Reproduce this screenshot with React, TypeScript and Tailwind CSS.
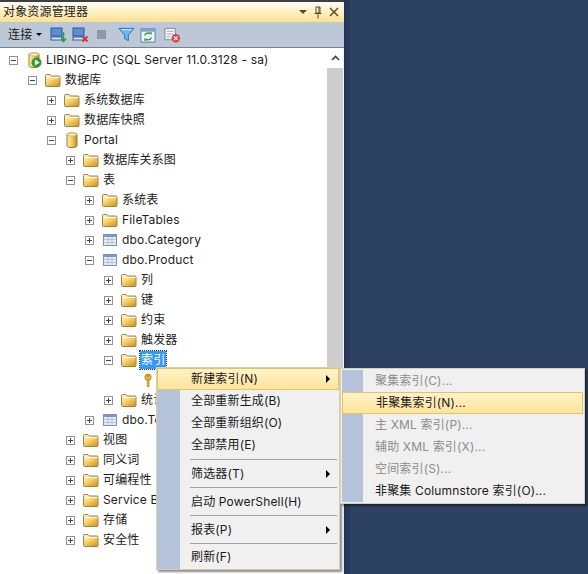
const fontStack = "font-['Inter','Noto_Sans_CJK_SC',sans-serif]";

type RowKind = "server" | "db" | "folder" | "table" | "key";

interface Row {
  level: number;
  text: string;
  kind: RowKind;
  box?: "plus" | "minus";
  selected?: boolean;
}

const rows: Row[] = [
  { level: 0, text: "LIBING-PC (SQL Server 11.0.3128 - sa)", kind: "server", box: "minus" },
  { level: 1, text: "数据库", kind: "folder", box: "minus" },
  { level: 2, text: "系统数据库", kind: "folder", box: "plus" },
  { level: 2, text: "数据库快照", kind: "folder", box: "plus" },
  { level: 2, text: "Portal", kind: "db", box: "minus" },
  { level: 3, text: "数据库关系图", kind: "folder", box: "plus" },
  { level: 3, text: "表", kind: "folder", box: "minus" },
  { level: 4, text: "系统表", kind: "folder", box: "plus" },
  { level: 4, text: "FileTables", kind: "folder", box: "plus" },
  { level: 4, text: "dbo.Category", kind: "table", box: "plus" },
  { level: 4, text: "dbo.Product", kind: "table", box: "minus" },
  { level: 5, text: "列", kind: "folder", box: "plus" },
  { level: 5, text: "键", kind: "folder", box: "plus" },
  { level: 5, text: "约束", kind: "folder", box: "plus" },
  { level: 5, text: "触发器", kind: "folder", box: "plus" },
  { level: 5, text: "索引", kind: "folder", box: "minus", selected: true },
  { level: 6, text: "", kind: "key" },
  { level: 5, text: "统计信息", kind: "folder", box: "plus" },
  { level: 4, text: "dbo.Test", kind: "table", box: "plus" },
  { level: 3, text: "视图", kind: "folder", box: "plus" },
  { level: 3, text: "同义词", kind: "folder", box: "plus" },
  { level: 3, text: "可编程性", kind: "folder", box: "plus" },
  { level: 3, text: "Service Broker", kind: "folder", box: "plus" },
  { level: 3, text: "存储", kind: "folder", box: "plus" },
  { level: 3, text: "安全性", kind: "folder", box: "plus" },
];

// inline-style padding: depends on the row's level
const indent = (level: number) => ({ paddingLeft: 9 + level * 19 });

function FolderIcon() {
  return (
    <svg width="16" height="13" viewBox="0 0 16 13">
      <defs>
        <linearGradient id="fld" x1="0" y1="0" x2="0.7" y2="1">
          <stop offset="0" stopColor="#fff6cf" />
          <stop offset="0.5" stopColor="#f8d674" />
          <stop offset="1" stopColor="#dd9c20" />
        </linearGradient>
      </defs>
      <path d="M0.500 11.500V1.500a1 1 0 0 1 1-1h3.500l1.500 1.500h7.500a1 1 0 0 1 1 1v8.500a1 1 0 0 1-1 1h-12.500a1 1 0 0 1-1-1z" fill="url(#fld)" stroke="#9a8550" strokeWidth="1" />
      <path d="M1.500 3.500h13" stroke="#fffdf0" strokeWidth="1" />
    </svg>
  );
}

function DbIcon({ play }: { play?: boolean }) {
  return (
    <svg width="16" height="18" viewBox="0 0 16 18">
      <defs>
        <linearGradient id="cyl" x1="0" y1="0" x2="1" y2="0">
          <stop offset="0" stopColor="#fff0b0" />
          <stop offset="0.5" stopColor="#f2cd5c" />
          <stop offset="1" stopColor="#c08a1c" />
        </linearGradient>
      </defs>
      <path d="M3 3.500C3 1.500 13 1.500 13 3.500V15C13 17 3 17 3 15z" fill="url(#cyl)" stroke="#9a7a34" />
      <ellipse cx="8" cy="3.500" rx="4.500" ry="1.500" fill="#fff6cf" stroke="#b89440" strokeWidth="0.6" />
      {play && <circle cx="10.500" cy="11.500" r="5" fill="#2f9a33" />}
      {play && <path d="M8.800 8.500l5 3-5 3z" fill="#fff" />}
    </svg>
  );
}

function TableIcon() {
  return (
    <svg width="14" height="12" viewBox="0 0 14 12">
      <rect x="0.500" y="0.500" width="13" height="11" fill="#e8eef8" stroke="#7d92b8" />
      <rect x="1" y="1" width="12" height="2" fill="#7d96c6" />
      <path d="M1 5.500h12M1 8.500h12M5 3v8M9 3v8" stroke="#b4c2dc" strokeWidth="1" />
    </svg>
  );
}

function KeyIcon() {
  return (
    <svg width="10" height="15" viewBox="0 0 12 17">
      <circle cx="6" cy="4.500" r="3.800" fill="#e9b93f" stroke="#a97f22" />
      <circle cx="6" cy="3" r="1" fill="#8a6a20" />
      <path d="M5 8v7.500l1.500 1 1-1V14l-1-0.700 1-0.800v-1l-1-0.700 1-0.800V8z" fill="#dca830" stroke="#a97f22" strokeWidth="0.6" />
    </svg>
  );
}

function ExpandBox({ type }: { type: "plus" | "minus" }) {
  return (
    <span className="relative flex h-[9px] w-[9px] items-center justify-center border border-[#919191] bg-white">
      <span className="h-px w-[5px] bg-[#444]" />
      {type === "plus" && <span className="absolute h-[5px] w-px bg-[#444]" />}
    </span>
  );
}

function TreeRow({ row }: { row: Row }) {
  return (
    <div className="flex h-5 items-center whitespace-nowrap" style={indent(row.level)}>
      <span className="flex w-[9px] shrink-0 justify-center">{row.box && <ExpandBox type={row.box} />}</span>
      <span className="ml-[8px] flex w-4 shrink-0 items-center justify-center">
        {row.kind === "folder" && <FolderIcon />}
        {row.kind === "db" && <DbIcon />}
        {row.kind === "server" && <DbIcon play />}
        {row.kind === "table" && <TableIcon />}
        {row.kind === "key" && <KeyIcon />}
      </span>
      {row.text && (
        <span className={row.selected ? "ml-[3px] bg-[#3399ff] px-[1px] text-white outline outline-1 outline-dotted outline-[#333]" : "ml-1"}>
          {row.text}
        </span>
      )}
    </div>
  );
}

function ToolIcons() {
  return (
    <div className="ml-[8px] flex items-center gap-[5px]">
      <svg width="17" height="17" viewBox="0 0 17 17">
        <rect x="1" y="2" width="11" height="8" fill="#5c8ed0" stroke="#2f5a9c" />
        <rect x="1" y="11" width="11" height="3" fill="#dfe7f3" stroke="#2f5a9c" />
        <path d="M13.500 6v9M11 12.500l2.500 3 2.500-3" stroke="#27a03a" strokeWidth="1.500" fill="none" />
      </svg>
      <svg width="17" height="17" viewBox="0 0 17 17">
        <rect x="1" y="2" width="11" height="8" fill="#5c8ed0" stroke="#2f5a9c" />
        <rect x="1" y="11" width="11" height="3" fill="#dfe7f3" stroke="#2f5a9c" />
        <path d="M10.500 10.500l5 5M15.500 10.500l-5 5" stroke="#d8322a" strokeWidth="1.800" />
      </svg>
      <span className="ml-[3px] mr-[7px] h-[9px] w-[9px] border border-[#8a94a5] bg-[#8f98a8]" />
      <svg width="17" height="17" viewBox="0 0 18 17">
        <path d="M1 2h16l-6 7v6l-4-2V9z" fill="#6bb7ee" stroke="#2a72c0" />
        <path d="M3.500 3.500h11" stroke="#e6f5ff" />
      </svg>
      <svg width="16" height="16" viewBox="0 0 17 17">
        <rect x="1" y="2" width="15" height="14" fill="#eef3fa" stroke="#5d7aa8" />
        <rect x="1" y="2" width="15" height="3" fill="#7fa3d4" />
        <path d="M5 9a3.500 3.500 0 0 1 6-1.500M12 11a3.500 3.500 0 0 1-6 1.500" stroke="#2f9a33" strokeWidth="1.500" fill="none" />
        <path d="M10 5.500l2.500 0v3zM7 14.500H4.500v-3z" fill="#2f9a33" />
      </svg>
      <svg className="ml-[3px]" width="17" height="18" viewBox="0 0 18 18">
        <path d="M1 2h11v12H1z" fill="#f3f5f9" stroke="#7d8798" />
        <path d="M3 5h7M3 8h7M3 11h4" stroke="#9aa5b8" />
        <circle cx="12.500" cy="12.500" r="4.500" fill="#d9424a" />
        <path d="M10.500 10.500l4 4M14.500 10.500l-4 4" stroke="#fff" strokeWidth="1.200" />
      </svg>
    </div>
  );
}

function MenuItem({ text, arrow, hot, off, h = "h-[22px]" }: { text: string; arrow?: boolean; hot?: boolean; off?: boolean; h?: string }) {
  return (
    <div className={`relative flex ${h} items-center whitespace-nowrap`}>
      {hot && <div className="absolute inset-0 border border-[#e5c365] bg-gradient-to-b from-[#fff3c8] to-[#ffe49b]" />}
      <span className={`relative ml-[34px] ${off ? "text-[#8d8d8d]" : "text-[#1a1a1a]"}`}>{text}</span>
      {arrow && <span className="absolute right-[9px] h-0 w-0 border-y-[4px] border-l-[4px] border-y-transparent border-l-black" />}
    </div>
  );
}

const MenuSep = () => <div className="ml-[33px] mr-[2px] h-px bg-[#a5a5a5]" />;

export default function App() {
  return (
    <div className={`relative flex h-[574px] w-[588px] overflow-hidden bg-[#2d4262] text-[12px] tracking-[0.16px] text-[#1c1c1c] ${fontStack}`}>
      <div className="flex h-full w-[345px] shrink-0 flex-col overflow-hidden rounded-tr-[3px] border-r border-[#1f2f4c]">
        <div className="h-[2px] bg-[#3d3d45]" />
        <div className="flex h-5 items-center justify-between bg-gradient-to-b from-[#fffdf3] via-[#fff0c4] to-[#fedf8c] pl-[3px] pr-[5px]">
          <span className="text-[#222]">对象资源管理器</span>
          <div className="flex items-center gap-[6px]">
            <span className="h-0 w-0 border-x-[4px] border-t-[4px] border-x-transparent border-t-[#5b4a1e]" />
            <svg width="10" height="13" viewBox="0 0 10 13">
              <path d="M3 1h4v6H3zM1.500 7.500h7M5 8v4.500M6 1v6" stroke="#5b4a1e" strokeWidth="1" fill="none" />
            </svg>
            <svg width="10" height="10" viewBox="0 0 10 10">
              <path d="M1 1l8 8M9 1l-8 8" stroke="#5b4a1e" strokeWidth="1.500" />
            </svg>
          </div>
        </div>
        <div className="flex h-[26px] items-center border-b border-[#77808f] bg-[#bcc7d8] pl-[8px]">
          <span className="text-[#222]">连接</span>
          <span className="ml-[4px] h-0 w-0 border-x-[3px] border-t-[3px] border-x-transparent border-t-black" />
          <ToolIcons />
        </div>
        <div className="flex flex-1 overflow-hidden bg-white">
          <div className="min-w-0 flex-1 overflow-hidden pt-[2px]">
            {rows.map((row, i) => (
              <TreeRow key={i} row={row} />
            ))}
          </div>
          <div className="flex w-[16px] shrink-0 flex-col">
            <div className="flex h-[20px] items-center justify-center">
              <svg width="9" height="6" viewBox="0 0 9 6">
                <path d="M1 5l3.500-3.500L8 5" stroke="#404040" strokeWidth="1.600" fill="none" />
              </svg>
            </div>
            <div className="h-[400px] bg-[#cdcdcd]" />
          </div>
          <div className="w-px bg-[#f2f2f2]" />
        </div>
      </div>
      <div className="h-full w-[5px] bg-[#26395c]" />

      {/* context menu */}
      <div className="absolute left-[156px] top-[367px] w-[184px] border border-[#d6cfb0] bg-[#f0f0f0] shadow-[2px_2px_2px_rgba(0,0,0,0.45)]">
        <div className="absolute bottom-0 left-0 top-0 w-[23px] bg-[#b4c3d9]" />
        <div className="relative flex flex-col">
          <MenuItem text="新建索引(N)" arrow hot />
          <MenuItem text="全部重新生成(B)" />
          <MenuItem text="全部重新组织(O)" />
          <MenuItem text="全部禁用(E)" />
          <div className="h-[3px]" />
          <MenuSep />
          <MenuItem text="筛选器(T)" arrow h="h-[27px]" />
          <MenuSep />
          <MenuItem text="启动 PowerShell(H)" h="h-[27px]" />
          <MenuSep />
          <MenuItem text="报表(P)" arrow h="h-[27px]" />
          <MenuSep />
          <MenuItem text="刷新(F)" h="h-[25px]" />
        </div>
      </div>

      {/* submenu */}
      <div className="absolute left-[340px] top-[368px] w-[245px] border border-[#d6cfb0] bg-[#f0f0f0] py-px shadow-[2px_2px_2px_rgba(0,0,0,0.45)]">
        <div className="absolute bottom-[1px] left-[1px] top-[1px] w-[21px] bg-[#b4c3d9]" />
        <div className="relative flex flex-col">
          <MenuItem text="聚集索引(C)..." off />
          <div className="mx-px">
            <MenuItem text="非聚集索引(N)..." hot />
          </div>
          <MenuItem text="主 XML 索引(P)..." off />
          <MenuItem text="辅助 XML 索引(X)..." off />
          <MenuItem text="空间索引(S)..." off />
          <MenuItem text="非聚集 Columnstore 索引(O)..." />
        </div>
      </div>
    </div>
  );
}
